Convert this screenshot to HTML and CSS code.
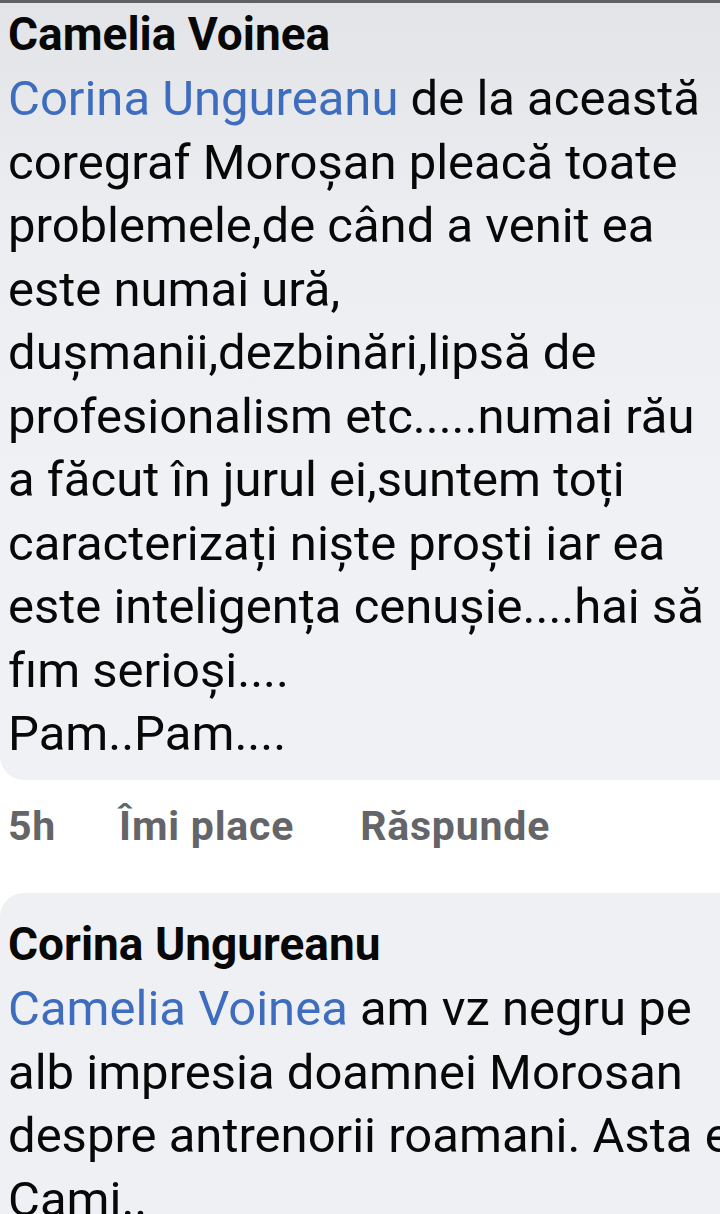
FILE: index.html
```html
<!DOCTYPE html>
<html lang="ro">
<head>
<meta charset="utf-8">
<link rel="stylesheet" href="styles.css">
</head>
<body>
<div class="topbar"></div>
<div class="bubble first">
  <div class="name">Camelia Voinea</div>
  <div class="text"><span class="tag">Corina Ungureanu</span> de la această<br>coregraf Moroșan pleacă toate<br>problemele,de când a venit ea<br>este numai ură,<br>dușmanii,dezbinări,lipsă de<br>profesionalism etc.....numai rău<br>a făcut în jurul ei,suntem toți<br>caracterizați niște proști iar ea<br>este inteligența cenușie....hai să<br>fım serioși....<br>Pam..Pam....</div>
</div>
<div class="actions">
  <span class="act">5h</span>
  <span class="act like">Îmi place</span>
  <span class="act">Răspunde</span>
</div>
<div class="bubble second">
  <div class="name">Corina Ungureanu</div>
  <div class="text"><span class="tag">Camelia Voinea</span> am vz negru pe<br>alb impresia doamnei Morosan<br>despre antrenorii roamani. Asta e<br>Cami..</div>
</div>
</body>
</html>
```
FILE: styles.css
```css
html, body {
  margin: 0;
  padding: 0;
  background: #ffffff;
  overflow: hidden;
}
body {
  width: 720px;
  height: 1214px;
  font-family: Roboto, "Noto Sans", sans-serif;
  color: #080808;
}
.topbar {
  height: 3px;
  background: #5e6064;
}
.bubble {
  width: 780px;
  padding-left: 8px;
  box-sizing: border-box;
  background: #eff0f3;
}
.first {
  background: linear-gradient(#e2e4e7 0px, #eceef1 240px, #f0f1f4 500px);
  border-bottom-left-radius: 24px;
  padding-top: 4px;
  padding-bottom: 14.5px;
}
.second {
  margin-top: 42px;
  border-top-left-radius: 24px;
  padding-top: 24px;
  height: 400px;
}
.name {
  font-weight: 700;
  font-size: 46px;
  line-height: 54px;
}
.text {
  margin-top: 6px;
  font-size: 49px;
  line-height: 63.5px;
  white-space: nowrap;
}
.tag {
  color: #3e6dc0;
}
.actions {
  display: flex;
  padding-left: 8px;
  margin-top: 21px;
  height: 50px;
}
.act {
  font-weight: 700;
  font-size: 41px;
  line-height: 50px;
  letter-spacing: 0.8px;
  color: #646568;
}
.like {
  margin: 0 66px 0 63px;
}
```
